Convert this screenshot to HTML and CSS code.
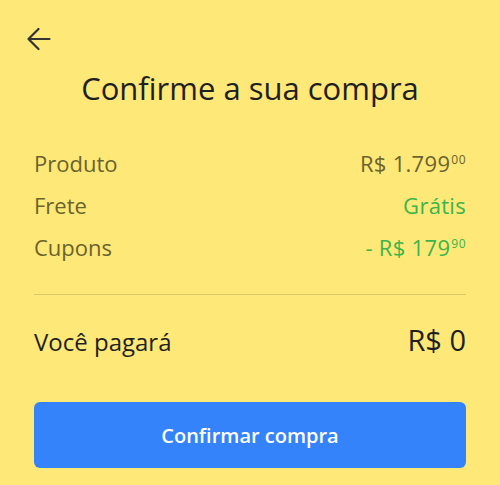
FILE: index.html
```html
<!DOCTYPE html>
<html lang="pt">
<head>
    <meta charset="UTF-8">
    <meta name="viewport" content="width=device-width, initial-scale=1.0">
    <title>Confirme a sua compra</title>
    <link rel="stylesheet" href="styles.css">
</head>
<body>
    <div class="page">
        <button class="back" aria-label="Voltar">
            <svg width="24" height="24" viewBox="0 0 24 24" fill="none" stroke="#333" stroke-width="2.2" stroke-linecap="round" stroke-linejoin="round">
                <path d="M22.5 12H1.5M11.5 2L1.5 12L11.5 22"/>
            </svg>
        </button>

        <h1>Confirme a sua compra</h1>

        <div class="summary">
            <div class="row">
                <span class="label">Produto</span>
                <span class="value">R$ 1.799<span class="cents">00</span></span>
            </div>
            <div class="row">
                <span class="label">Frete</span>
                <span class="value green">Grátis</span>
            </div>
            <div class="row">
                <span class="label">Cupons</span>
                <span class="value green">- R$ 179<span class="cents">90</span></span>
            </div>
        </div>

        <div class="total">
            <span>Você pagará</span>
            <span class="total-value">R$ 0</span>
        </div>

        <button class="confirm">Confirmar compra</button>
    </div>
</body>
</html>
```

FILE: styles.css
```css
body {
    margin: 0;
    padding: 0;
    background-color: #fee878;
    font-family: 'Open Sans', Lato, sans-serif;
    color: #1f1f1f;
}

.page {
    padding: 27px 34px 0;
}

.back {
    display: block;
    border: none;
    background: none;
    padding: 0;
    margin-left: -7px;
    width: 24px;
    height: 24px;
    cursor: pointer;
}

.back svg {
    display: block;
}

h1 {
    margin: 17px 0 0;
    text-align: center;
    font-size: 31px;
    font-weight: 400;
    line-height: 40px;
}

.summary {
    margin-top: 34px;
    padding-bottom: 26px;
    border-bottom: 1px solid #d8c86c;
}

.row {
    display: flex;
    justify-content: space-between;
    align-items: baseline;
    font-size: 22px;
    line-height: 42px;
    color: #6b632c;
}

.value {
    letter-spacing: 0.3px;
}

.green {
    color: #3bb54a;
}

.cents {
    font-size: 12px;
    line-height: 0;
    vertical-align: 8px;
    margin-left: 1px;
    letter-spacing: 0.5px;
}

.total {
    display: flex;
    justify-content: space-between;
    align-items: baseline;
    margin-top: 25px;
    font-size: 24px;
    line-height: 40px;
}

.total-value {
    font-size: 29px;
}

.confirm {
    display: block;
    width: 100%;
    height: 66px;
    margin-top: 40px;
    border: none;
    border-radius: 6px;
    background-color: #3483fa;
    color: #fff;
    font-family: 'Open Sans', Lato, sans-serif;
    font-size: 20px;
    font-weight: 600;
    cursor: pointer;
}
```
